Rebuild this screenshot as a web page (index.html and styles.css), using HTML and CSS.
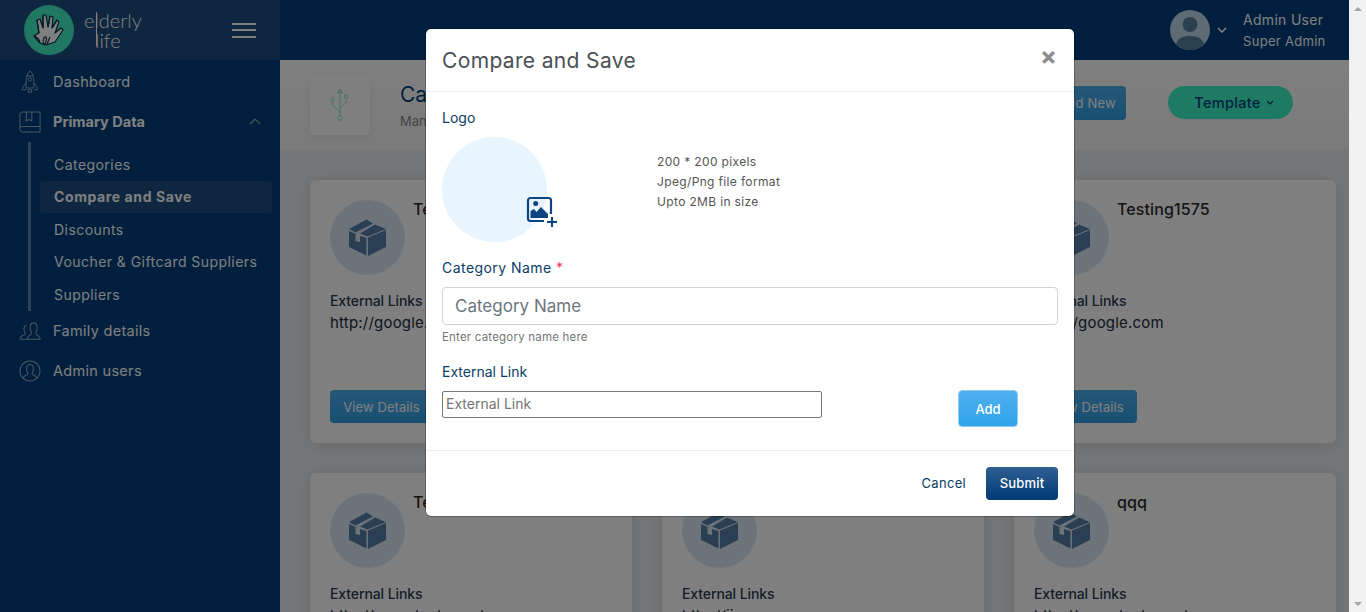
FILE: index.html
```html
<!DOCTYPE html>
<html lang="en">
<head>
    <meta charset="UTF-8">
    <meta name="viewport" content="width=device-width, initial-scale=1.0">
    <title>Compare and Save</title>
    <link rel="stylesheet" href="styles.css">
</head>
<body>
    <svg class="defs" width="0" height="0">
        <symbol id="box" viewBox="0 0 37 37">
            <path d="M0 12L6.500 15V22L11 23V17L17.500 19V36.500L0 28Z"/>
            <path d="M19 18.500L37 11V28L19 37Z"/>
            <path d="M0 10L17.500.5 24 4.500 6.500 13.500Z"/>
            <path d="M26 5.500L37 10 18.500 17.500 11 14.500Z"/>
        </symbol>
    </svg>

    <div class="page">
        <div class="app">
            <aside class="sidebar">
                <div class="brand">
                    <span class="brand-mark">
                        <svg width="36" height="36" viewBox="0 0 36 36">
                            <path class="hand" d="M3 24L8 21 6 8 9 7 12 16 12 3 15 3 17 15 19 4 22 5 21 16 26 8 28 10 24 21 30 16 32 18 24 30 15 33 9 31Z"/>
                            <path class="hand-back" d="M3 24C6 26 8 25 9 31M13 33C11 29 13 24 15 25 16 27 15 31 13 33M16 33C17 29 18 27 19 25M8 21L6 8M12 16L12 3M17 15L19 4M21 16L26 8"/>
                        </svg>
                    </span>
                    <span class="wordmark">
                        <span class="word">elderly</span>
                        <span class="word word-low">life</span>
                        <i class="wordmark-line"></i>
                    </span>
                    <span class="burger"><i></i><i></i><i></i></span>
                </div>
                <nav class="nav">
                    <a class="nav-item">
                        <svg class="nav-icon" viewBox="0 0 24 28"><path d="M12 1C8 5 7.500 9 7.500 13V21H16.500V13C16.500 9 16 5 12 1ZM7.500 15L3 21V23H7.500M16.500 15L21 21V23H16.500M10 23H14V26H10ZM8 7H16"/><circle cx="12" cy="11" r="2"/></svg>
                        Dashboard
                    </a>
                    <a class="nav-item nav-open">
                        <svg class="nav-icon" viewBox="0 0 24 24"><path d="M4 1H23V23H4C2.500 23 1 21.500 1 20V4C1 2.500 2.500 1 4 1ZM1 19C1 17.500 2.500 17 4 17H23M8 1V11L11 9 14 11V1"/></svg>
                        Primary Data
                        <svg class="nav-caret" width="12" height="7" viewBox="0 0 12 7"><path d="M1 6L6 1 11 6"/></svg>
                    </a>
                    <div class="subnav">
                        <a class="sub-item">Categories</a>
                        <a class="sub-item sub-active">Compare and Save</a>
                        <a class="sub-item">Discounts</a>
                        <a class="sub-item">Voucher &amp; Giftcard Suppliers</a>
                        <a class="sub-item">Suppliers</a>
                    </div>
                    <a class="nav-item">
                        <svg class="nav-icon" viewBox="0 0 24 20"><path d="M1 19C1 16 3 15 6 14 7 13.500 7 12 6 10.500 5 9 5 4 8 4M15 19H1M9 19C9 16 11 15 13 14 14 13 14 12 13 10 11.500 7 12 1 16 1 20 1 20.500 7 19 10 18 12 18 13 19 14 21 15 23 16 23 19Z"/></svg>
                        Family details
                    </a>
                    <a class="nav-item">
                        <svg class="nav-icon" viewBox="0 0 24 24"><circle cx="12" cy="12" r="11"/><path d="M4.500 20C5 17.500 7 17 9 16 10 15.500 10 14 9 13 7.500 10 8 5 12 5 16 5 16.500 10 15 13 14 14 14 15.500 15 16 17 17 19 17.500 19.500 20"/></svg>
                        Admin users
                    </a>
                </nav>
            </aside>

            <div class="main">
                <header class="topbar">
                    <span class="user-pic">
                        <svg width="40" height="40" viewBox="0 0 40 40"><circle cx="20" cy="14.500" r="7.500"/><path d="M6 34C8 28 13 26 20 26 27 26 32 28 34 34 30 38 25 40 20 40 15 40 10 38 6 34Z"/></svg>
                    </span>
                    <svg class="user-caret" width="10" height="6" viewBox="0 0 10 6"><path d="M1 1L5 5 9 1"/></svg>
                    <div class="user-info">
                        <div class="user-name">Admin User</div>
                        <div class="user-role">Super Admin</div>
                    </div>
                </header>

                <section class="page-head">
                    <span class="head-tile">
                        <svg width="20" height="34" viewBox="0 0 20 34" fill="none"><path d="M10 1V28M10 1L7.500 5H12.500ZM10 24L2.500 17V13M10 20L16 15V10"/><circle cx="2.500" cy="11.500" r="1.800"/><rect x="14.500" y="7" width="3" height="3"/><circle cx="10" cy="30" r="2.300"/></svg>
                    </span>
                    <div class="head-text">
                        <h2>Categories</h2>
                        <p>Manage categories</p>
                    </div>
                    <a class="btn-new">Add New</a>
                    <a class="btn-template">Template <svg width="8" height="5" viewBox="0 0 8 5"><path d="M1 1L4 4 7 1"/></svg></a>
                </section>

                <section class="cards">
                    <article class="card">
                        <div class="card-top">
                            <span class="card-pic"><svg width="37" height="37"><use href="#box"/></svg></span>
                            <h3>Testing1572</h3>
                        </div>
                        <h4>External Links</h4>
                        <p class="card-link">http://google.com</p>
                        <a class="btn-view">View Details</a>
                    </article>
                    <article class="card">
                        <div class="card-top">
                            <span class="card-pic"><svg width="37" height="37"><use href="#box"/></svg></span>
                            <h3>Testing1573</h3>
                        </div>
                        <h4>External Links</h4>
                        <p class="card-link">http://google.com</p>
                        <a class="btn-view">View Details</a>
                    </article>
                    <article class="card">
                        <div class="card-top">
                            <span class="card-pic"><svg width="37" height="37"><use href="#box"/></svg></span>
                            <h3>Testing1575</h3>
                        </div>
                        <h4>External Links</h4>
                        <p class="card-link">http://google.com</p>
                        <a class="btn-view">View Details</a>
                    </article>
                    <article class="card">
                        <div class="card-top">
                            <span class="card-pic"><svg width="37" height="37"><use href="#box"/></svg></span>
                            <h3>Testing1576</h3>
                        </div>
                        <h4>External Links</h4>
                        <p class="card-link">http://www.test.com/</p>
                    </article>
                    <article class="card">
                        <div class="card-top">
                            <span class="card-pic"><svg width="37" height="37"><use href="#box"/></svg></span>
                            <h3>Testing1577</h3>
                        </div>
                        <h4>External Links</h4>
                        <p class="card-link">http://jio.com</p>
                    </article>
                    <article class="card">
                        <div class="card-top">
                            <span class="card-pic"><svg width="37" height="37"><use href="#box"/></svg></span>
                            <h3>qqq</h3>
                        </div>
                        <h4>External Links</h4>
                        <p class="card-link">http://www.test.com/</p>
                    </article>
                </section>
            </div>

            <div class="backdrop"></div>

            <div class="modal">
                <div class="modal-head">
                    <h5>Compare and Save</h5>
                    <span class="modal-close">&times;</span>
                </div>
                <div class="modal-body">
                    <label class="field-label">Logo</label>
                    <div class="logo-row">
                        <div class="logo-drop">
                            <svg class="logo-add" width="32" height="32" viewBox="0 0 32 32">
                                <path class="logo-frame" d="M18 25H4.500A2.500 2.500 0 0 1 2 22.500V4.500A2.500 2.500 0 0 1 4.500 2H22.500A2.500 2.500 0 0 1 25 4.500V18"/>
                                <circle cx="9.700" cy="7.500" r="2.500"/>
                                <path d="M4.500 22V15L8 13 10.500 16 15 11 22 18V22Z"/>
                                <path class="logo-frame" d="M26 21V31M21 26H31"/>
                            </svg>
                        </div>
                        <ul class="logo-rules">
                            <li>200 * 200 pixels</li>
                            <li>Jpeg/Png file format</li>
                            <li>Upto 2MB in size</li>
                        </ul>
                    </div>
                    <label class="field-label label-name">Category Name <span class="req">*</span></label>
                    <input class="input-name" type="text" placeholder="Category Name">
                    <small class="field-help">Enter category name here</small>
                    <label class="field-label label-link">External Link</label>
                    <div class="link-row">
                        <input class="input-link" type="text" placeholder="External Link">
                        <button class="btn-add">Add</button>
                    </div>
                </div>
                <div class="modal-foot">
                    <a class="btn-cancel">Cancel</a>
                    <button class="btn-submit">Submit</button>
                </div>
            </div>
        </div>
        <div class="scrollbar"><i class="arrow-up"></i><i class="arrow-down"></i></div>
    </div>
</body>
</html>
```

FILE: styles.css
```css
* {
    box-sizing: border-box;
}

body {
    margin: 0;
    font-family: Inter, "Open Sans", sans-serif;
    overflow: hidden;
}

h2, h3, h4, h5, p, ul {
    margin: 0;
    padding: 0;
}

.defs {
    position: absolute;
}

.page {
    display: flex;
    height: 612px;
    overflow: hidden;
}

.app {
    position: relative;
    display: flex;
    flex: 1;
    min-width: 0;
    height: 612px;
    overflow: hidden;
    background: #e8ebef;
}

.scrollbar {
    width: 17px;
    background: #f1f1f1;
    display: flex;
    flex-direction: column;
    justify-content: space-between;
    align-items: center;
    padding: 7px 0 6px;
}

.scrollbar i {
    width: 0;
    height: 0;
    border-left: 4px solid transparent;
    border-right: 4px solid transparent;
}

.arrow-up {
    border-bottom: 4px solid #a3a3a3;
}

.arrow-down {
    border-top: 4px solid #a3a3a3;
}

/* sidebar */
.sidebar {
    width: 280px;
    flex: none;
    background: #003f7c;
    color: #fff;
}

.brand {
    height: 60px;
    background: #1c4d80;
    display: flex;
    align-items: center;
    padding: 0 24px;
}

.brand-mark {
    width: 50px;
    height: 50px;
    border-radius: 50%;
    background: #40f0c4;
    display: flex;
    align-items: center;
    justify-content: center;
    flex: none;
}

.hand {
    fill: #fff;
    stroke: #0a2c4e;
    stroke-width: 1.2;
    stroke-linejoin: round;
}

.hand-back {
    fill: none;
    stroke: #0a2c4e;
    stroke-width: 1.2;
}

.wordmark {
    position: relative;
    display: flex;
    flex-direction: column;
    margin-left: 10px;
    font-family: Lato, sans-serif;
    font-weight: 300;
    font-size: 20px;
    line-height: 20px;
}

.word-low {
    padding-left: 11px;
}

.wordmark-line {
    position: absolute;
    left: 12px;
    top: 2px;
    width: 1px;
    height: 34px;
    background: #fff;
}

.burger {
    margin-left: auto;
    display: flex;
    flex-direction: column;
    gap: 4.500px;
}

.burger i {
    display: block;
    width: 24px;
    height: 2px;
    background: #fff;
}

.nav {
    display: flex;
    flex-direction: column;
    padding: 2px 8px 0 0;
}

.nav-item {
    display: flex;
    align-items: center;
    height: 40px;
    padding: 0 0 2px 53px;
    position: relative;
    font-size: 14.500px;
    letter-spacing: .3px;
}

.nav-icon {
    position: absolute;
    left: 19px;
    top: 8px;
    width: 22px;
    height: 24px;
    fill: none;
    stroke: #95aec4;
    stroke-width: 1.1;
}

.nav-open {
    font-weight: 700;
    letter-spacing: 0;
}

.nav-caret {
    margin-left: auto;
    margin-right: 11px;
    fill: none;
    stroke: #95aec4;
    stroke-width: 1.2;
}

.subnav {
    margin-left: 28px;
    border-left: 3px solid #5f86ae;
    padding: 6px 0 0 9px;
    height: 169px;
}

.sub-item {
    display: flex;
    align-items: center;
    height: 32.500px;
    padding-left: 14px;
    font-size: 14px;
    letter-spacing: .45px;
    border-radius: 4px;
}

.sub-active {
    background: #1c4d80;
    font-weight: 700;
    letter-spacing: .6px;
}

/* page */
.main {
    flex: 1;
    min-width: 0;
}

.topbar {
    height: 60px;
    background: #003f7c;
    color: #fff;
    display: flex;
    align-items: center;
    padding-left: 890px;
}

.user-pic {
    width: 40px;
    height: 40px;
    border-radius: 50%;
    background: #bcd4e8;
    overflow: hidden;
    flex: none;
}

.user-pic svg {
    display: block;
    fill: #56809f;
}

.user-caret {
    margin: 0 16px 0 7px;
    fill: none;
    stroke: #fff;
    stroke-width: 1.6;
}

.user-name {
    font-size: 14px;
    line-height: 20px;
    letter-spacing: .3px;
}

.user-role {
    font-size: 13px;
    line-height: 20px;
    margin-top: 1px;
    letter-spacing: .3px;
}

.page-head {
    height: 90px;
    background: linear-gradient(#fff, #f4f5f6);
    display: flex;
    align-items: center;
    padding: 0 56px 0 30px;
}

.head-tile {
    width: 60px;
    height: 60px;
    background: #fff;
    border-radius: 4px;
    box-shadow: 0 2px 10px rgba(0, 0, 0, .08);
    display: flex;
    align-items: center;
    justify-content: center;
    flex: none;
}

.head-tile svg {
    stroke: #8de8d0;
    stroke-width: 1;
}

.head-text {
    margin-left: 30px;
}

.head-text h2 {
    font-size: 21px;
    font-weight: 400;
    color: #003f7c;
}

.head-text p {
    font-size: 13px;
    color: #888;
    margin-top: 6px;
}

.btn-new {
    margin: -5px 0 0 auto;
    width: 78px;
    height: 34px;
    border-radius: 4px;
    background: linear-gradient(#4fb0ee, #2f9fe6);
    color: #fff;
    font-size: 13px;
    letter-spacing: .2px;
    display: flex;
    align-items: center;
    justify-content: center;
    white-space: nowrap;
}

.btn-template {
    margin: -5px 0 0 42px;
    width: 125px;
    height: 33px;
    padding-left: 7px;
    border-radius: 17px;
    background: #3df4c6;
    color: #003f7c;
    font-size: 14.500px;
    font-weight: 500;
    letter-spacing: .3px;
    display: flex;
    align-items: center;
    justify-content: center;
    gap: 5px;
}

.btn-template svg {
    fill: none;
    stroke: #003f7c;
    stroke-width: 1.2;
}

.cards {
    display: grid;
    grid-template-columns: repeat(3, 322px);
    gap: 30px;
    padding: 30px;
}

.card {
    background: #fff;
    height: 263px;
    border-radius: 6px;
    padding: 20px;
    box-shadow: 0 2px 14px rgba(0, 0, 0, .1);
    position: relative;
}

.card-top {
    display: flex;
    align-items: flex-start;
    margin-bottom: 16px;
}

.card-pic {
    width: 75px;
    height: 75px;
    border-radius: 50%;
    background: #d8e8f4;
    display: flex;
    align-items: center;
    justify-content: center;
    flex: none;
}

.card-pic svg {
    fill: #567fa8;
}

.card-top h3 {
    font-size: 16px;
    font-weight: 500;
    line-height: 20px;
    letter-spacing: .1px;
    margin: -1px 0 0 8px;
    color: #2a2a2a;
}

.card h4 {
    font-size: 14px;
    font-weight: 500;
    line-height: 20px;
    letter-spacing: -.1px;
    color: #2a3a50;
}

.card-link {
    font-size: 15px;
    line-height: 24px;
    letter-spacing: .2px;
    color: #1a2a3a;
}

.btn-view {
    position: absolute;
    left: 20px;
    bottom: 20px;
    width: 103px;
    height: 33px;
    border-radius: 4px;
    background: linear-gradient(#4fb0ee, #2f9fe6);
    color: #fff;
    font-size: 13px;
    letter-spacing: .1px;
    display: flex;
    align-items: center;
    justify-content: center;
}

/* modal */
.backdrop {
    position: absolute;
    inset: 0;
    background: rgba(0, 0, 0, .5);
}

.modal {
    position: absolute;
    left: 425px;
    top: 28px;
    width: 650px;
    height: 489px;
    background: #fff;
    background-clip: padding-box;
    border: 1px solid rgba(0, 0, 0, .25);
    border-radius: 6px;
    display: flex;
    flex-direction: column;
}

.modal-head {
    height: 63px;
    flex: none;
    display: flex;
    align-items: center;
    justify-content: space-between;
    padding: 0 16px;
    border-bottom: 1px solid #e9ecef;
}

.modal-head h5 {
    font-size: 21px;
    font-weight: 400;
    color: #4a4f55;
    letter-spacing: .35px;
}

.modal-close {
    font-size: 25px;
    font-weight: 700;
    color: #8a8a8a;
    line-height: 1;
    margin: -8px 1px 0 0;
}

.modal-body {
    flex: 1;
    padding: 16px 16px 0;
    display: flex;
    flex-direction: column;
}

.field-label {
    font-size: 14px;
    line-height: 20px;
    color: #0a3d66;
}

.logo-row {
    display: flex;
    margin-top: 9px;
}

.logo-drop {
    position: relative;
    width: 105px;
    height: 105px;
    border-radius: 50%;
    background: #e8f4fe;
    flex: none;
}

.logo-add {
    position: absolute;
    left: 84px;
    top: 59px;
    fill: #0d4580;
}

.logo-frame {
    fill: none;
    stroke: #0d4580;
    stroke-width: 2.200;
}

.logo-rules {
    list-style: none;
    margin: 15px 0 0 110px;
    font-size: 12px;
    line-height: 20px;
    letter-spacing: .35px;
    color: #555;
}

.label-name {
    margin-top: 16px;
    letter-spacing: .45px;
}

.req {
    color: #f0386b;
}

.input-name {
    margin-top: 9px;
    height: 38px;
    width: 100%;
    border: 1px solid #ced4da;
    border-radius: 4px;
    padding: 0 12px;
    font-family: inherit;
    font-size: 17px;
    outline: none;
    flex: none;
}

.input-name::placeholder {
    color: #6c757d;
}

.field-help {
    font-size: 11.500px;
    line-height: 16px;
    letter-spacing: .2px;
    margin-top: 4px;
    color: #777;
}

.label-link {
    margin-top: 17px;
}

.link-row {
    display: flex;
    align-items: flex-start;
    justify-content: space-between;
    padding-right: 40px;
    margin-top: 8px;
}

.input-link {
    width: 380px;
    height: 27px;
    border: 1px solid #767676;
    border-radius: 2px;
    padding: 0 3px 2px;
    font-family: inherit;
    font-size: 14px;
    outline: none;
    margin-top: 1px;
}

.input-link::placeholder {
    color: #757575;
}

.btn-add {
    width: 60px;
    height: 37px;
    border: 1px solid #8fcdf3;
    border-radius: 4px;
    background: linear-gradient(#4fb0ee, #2fa3ea);
    color: #fff;
    font-family: inherit;
    font-size: 13px;
    font-weight: 500;
}

.modal-foot {
    height: 66px;
    flex: none;
    border-top: 1px solid #e9ecef;
    display: flex;
    align-items: center;
    justify-content: flex-end;
    padding: 0 16px;
    gap: 20px;
}

.btn-cancel {
    font-size: 13px;
    letter-spacing: .3px;
    padding-bottom: 2px;
    color: #0a3d66;
}

.btn-submit {
    width: 72px;
    height: 33px;
    border: 0;
    border-radius: 4px;
    padding-bottom: 2px;
    background: linear-gradient(#2f5e92, #003a75);
    color: #fff;
    font-family: inherit;
    font-size: 13px;
    font-weight: 500;
    letter-spacing: .2px;
}
```
